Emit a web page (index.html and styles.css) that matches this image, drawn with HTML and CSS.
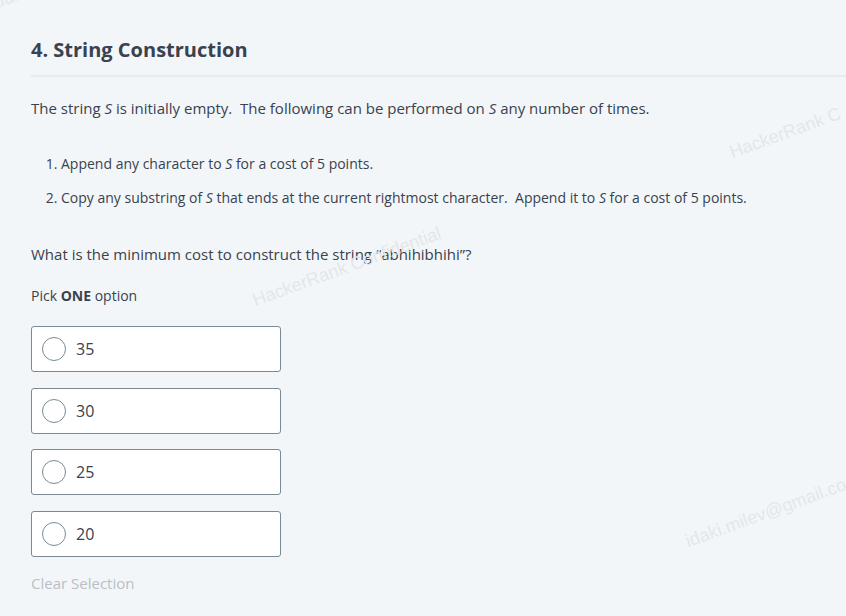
FILE: index.html
```html
<!DOCTYPE html>
<html>
<head>
<meta charset="utf-8">
<link rel="stylesheet" href="styles.css">
</head>
<body>
<div class="page">
  <h1 class="title">4. String Construction</h1>
  <p class="intro">The string <i>S</i> is initially empty.&nbsp; The following can be performed on <i>S</i> any number of times.</p>
  <ol class="steps">
    <li>Append any character to <i>S</i> for a cost of 5 points.</li>
    <li>Copy any substring of <i>S</i> that ends at the current rightmost character.&nbsp; Append it to <i>S</i> for a cost of 5 points.</li>
  </ol>
  <p class="question">What is the minimum cost to construct the string “abhihibhihi”?</p>
  <p class="pick">Pick <b>ONE</b> option</p>
  <div class="options">
    <label class="option"><span class="radio"></span><span class="val">35</span></label>
    <label class="option"><span class="radio"></span><span class="val">30</span></label>
    <label class="option"><span class="radio"></span><span class="val">25</span></label>
    <label class="option"><span class="radio"></span><span class="val">20</span></label>
  </div>
  <div class="clear">Clear Selection</div>
</div>
<div class="wm wm1">HackerRank C</div>
<div class="wm wm2">HackerRank Confidential</div>
<div class="wm wm3">idaki.milev@gmail.co</div>
<div class="wm wm4">dal</div>
</body>
</html>
```
FILE: styles.css
```css
html, body {
  margin: 0;
  padding: 0;
  background: #f3f6f8;
  overflow: hidden;
}
body {
  font-family: "Open Sans", "Liberation Sans", sans-serif;
  color: #39424e;
  width: 846px;
  height: 616px;
  position: relative;
}
.page {
  padding: 36px 0 0 31px;
}
.title {
  margin: 0;
  font-size: 20px;
  font-weight: 700;
  line-height: 28px;
  padding-bottom: 11px;
  border-bottom: 2px solid #e7ebee;
}
.intro {
  margin: 20px 0 0;
  font-size: 15px;
  line-height: 22px;
}
.steps {
  margin: 35px 0 0;
  padding-left: 30px;
  font-size: 14px;
  line-height: 20px;
}
.steps li {
  margin-bottom: 14px;
}
.question {
  margin: 35px 0 0;
  font-size: 15px;
  line-height: 22px;
}
.pick {
  margin: 21px 0 0;
  font-size: 14px;
  line-height: 20px;
}
.options {
  margin-top: 20px;
  display: flex;
  flex-direction: column;
  gap: 15.7px;
}
.option {
  width: 250px;
  height: 46px;
  box-sizing: border-box;
  background: #fff;
  border: 1px solid #7a8a94;
  border-radius: 3px;
  display: flex;
  align-items: center;
  padding-left: 10px;
}
.radio {
  width: 24px;
  height: 24px;
  border: 1px solid #7a8a94;
  border-radius: 50%;
  box-sizing: border-box;
  background: #fff;
}
.val {
  margin-left: 10px;
  font-size: 16px;
  color: #39424e;
}
.clear {
  margin-top: 15px;
  font-size: 15px;
  color: #b8c0c6;
  line-height: 22px;
}
.wm {
  position: absolute;
  font-family: "Liberation Sans", Arial, sans-serif;
  font-size: 18px;
  color: #e3e7ea;
  transform: rotate(-20deg);
  transform-origin: left bottom;
  white-space: nowrap;
}
.wm1 { left: 734px; top: 142px; }
.wm2 { left: 257px; top: 290px; }
.wm3 { left: 690px; top: 531px; }
.wm4 { left: -2px; top: -8px; }
```
